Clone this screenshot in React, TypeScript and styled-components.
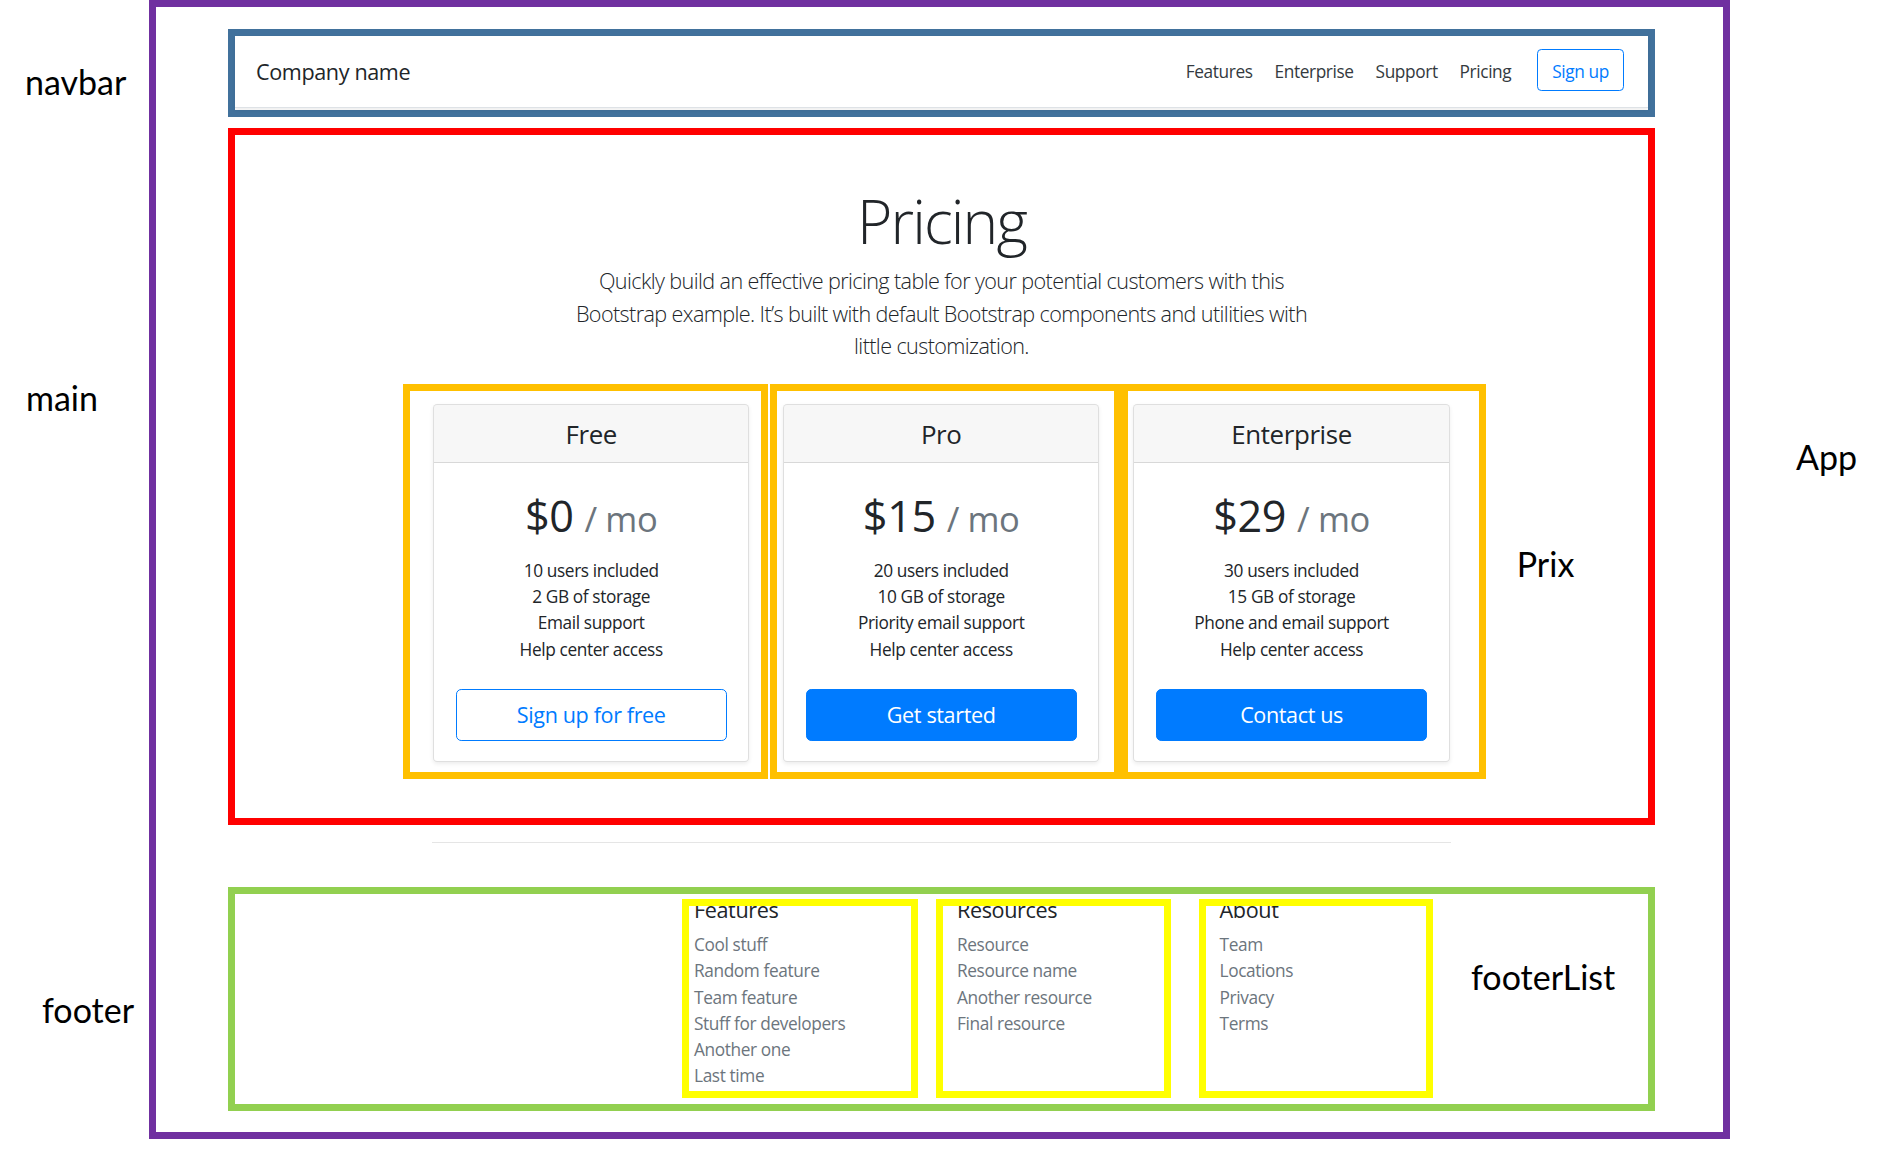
import React from "react";
import styled, { createGlobalStyle } from "styled-components";

const GlobalStyle = createGlobalStyle`
  html, body {
    margin: 0;
    padding: 0;
    background: #ffffff;
  }
  body {
    font-family: "Open Sans", "Noto Sans", sans-serif;
    letter-spacing: -0.024em;
    color: #212529;
  }
  *, *::before, *::after {
    box-sizing: border-box;
  }
`;

const Page = styled.div`
  display: grid;
  grid-template-columns: 149px 1581px 1fr;
  grid-template-rows: auto auto auto;
  align-content: start;
  width: 1880px;
  min-height: 1157px;
`;

const AppFrame = styled.div`
  grid-column: 2;
  grid-row: 1 / -1;
  border: 7px solid #7030a0;
`;

const Callout = styled.div<{ $top: number; $left: number }>`
  font-family: Lato, "Liberation Sans", sans-serif;
  font-size: 34px;
  line-height: 40px;
  letter-spacing: normal;
  color: #000000;
  white-space: nowrap;
  align-self: start;
  justify-self: start;
  margin-top: ${(p) => p.$top}px;
  margin-left: ${(p) => p.$left}px;
`;

const SideLabel = styled(Callout)<{ $row: number }>`
  grid-column: 1;
  grid-row: ${(p) => p.$row};
`;

const AppLabel = styled(Callout)`
  grid-column: 3;
  grid-row: 1 / -1;
`;

/* ---------- navbar ---------- */

const NavOutline = styled.div`
  grid-column: 2;
  grid-row: 1;
  align-self: start;
  margin: 29px 75px 0 79px;
  border: 7px solid #41719c;
`;

const Navbar = styled.header`
  display: flex;
  align-items: center;
  height: 72px;
  padding: 0 24px 3px 21px;
  margin-bottom: 2px;
  background: #ffffff;
  border-bottom: 1px solid #dee2e6;
  box-shadow: 0 2px 4px rgba(0, 0, 0, 0.075);
`;

const Brand = styled.h5`
  margin: 4px auto 0 0;
  font-size: 21.6px;
  font-weight: 400;
  line-height: 26px;
  color: #212529;
`;

const NavLinks = styled.nav`
  display: flex;
  gap: 4.7px;
  margin-right: 17.3px;
`;

const NavLink = styled.a`
  padding: 10.6px 8.64px 6.6px;
  font-size: 17.28px;
  line-height: 25.9px;
  color: #343a40;
  text-decoration: none;
`;

const OutlineButton = styled.a`
  display: inline-block;
  padding: 9px 14px 5px;
  font-size: 17.28px;
  line-height: 25.9px;
  color: #007bff;
  border: 1px solid #007bff;
  border-radius: 4.3px;
  text-decoration: none;
`;

/* ---------- main ---------- */

const MainOutline = styled.main`
  grid-column: 2;
  grid-row: 2;
  align-self: start;
  margin: 11px 75px 0 79px;
  border: 7px solid #ff0000;
  padding: 49.5px 0 39px;
`;

const Title = styled.h1`
  margin: 0 0 8.3px;
  font-size: 60.5px;
  font-weight: 300;
  line-height: 72.6px;
  letter-spacing: -0.031em;
  text-align: center;
  color: #212529;
`;

const Lead = styled.p`
  margin: 0;
  font-size: 21.6px;
  font-weight: 300;
  line-height: 32.2px;
  letter-spacing: -0.028em;
  text-align: center;
  color: #212529;
`;

const PrixRow = styled.div`
  display: flex;
  align-items: flex-start;
  margin-top: 22px;
  padding-left: 168px;
`;

const PrixOutline = styled.div<{ $ml: number; $pl: number; $pr: number }>`
  margin-left: ${(p) => p.$ml}px;
  padding: 13px ${(p) => p.$pr}px 10px ${(p) => p.$pl}px;
  border: 7px solid #ffc000;
`;

const Card = styled.div`
  width: 316.4px;
  display: flex;
  flex-direction: column;
  background: #ffffff;
  border: 1px solid rgba(0, 0, 0, 0.125);
  border-radius: 4.3px;
  box-shadow: 0 2px 4px rgba(0, 0, 0, 0.075);
  overflow: hidden;
`;

const CardHeader = styled.div`
  padding: 14px 21.6px 12px;
  background: rgba(0, 0, 0, 0.03);
  border-bottom: 1px solid rgba(0, 0, 0, 0.125);
  text-align: center;
`;

const PlanName = styled.h4`
  margin: 0;
  font-size: 25.9px;
  font-weight: 400;
  line-height: 31px;
  color: #212529;
`;

const CardBody = styled.div`
  padding: 21.6px 21.6px 19.8px;
  text-align: center;
`;

const Price = styled.h1`
  margin: 5.1px 0 0;
  font-size: 43.2px;
  font-weight: 400;
  line-height: 51.8px;
  color: #212529;
`;

const Per = styled.small`
  font-size: 80%;
  font-weight: 400;
  line-height: 1;
  color: #6c757d;
`;

const FeatureList = styled.ul`
  list-style: none;
  margin: 16.2px 0 26.3px;
  padding: 0;
`;

const Feature = styled.li`
  font-size: 17.28px;
  line-height: 26.3px;
  color: #212529;
`;

const PlanButton = styled.button<{ $solid?: boolean }>`
  display: block;
  width: 100%;
  height: 52px;
  padding: 0 17.28px;
  font-family: inherit;
  letter-spacing: inherit;
  font-size: 21.6px;
  line-height: 32.4px;
  border: 1px solid #007bff;
  border-radius: 5.2px;
  background: ${(p) => (p.$solid ? "#007bff" : "#ffffff")};
  color: ${(p) => (p.$solid ? "#ffffff" : "#007bff")};
  cursor: pointer;
`;

/* ---------- footer ---------- */

const FooterArea = styled.footer`
  grid-column: 2;
  grid-row: 3;
  align-self: start;
  margin: 17px 75px 28px 79px;
  display: flex;
  flex-direction: column;
`;

const Rule = styled.hr`
  margin: 0 0 0 204px;
  width: 1019px;
  height: 0;
  border: 0;
  border-top: 1px solid rgba(0, 0, 0, 0.1);
`;

const FooterOutline = styled.div`
  margin-top: 44px;
  height: 224px;
  display: flex;
  align-items: flex-start;
  padding: 5px 0 0 447px;
  border: 7px solid #92d050;
`;

const ListOutline = styled.div<{ $w: number; $ml: number; $pl: number }>`
  position: relative;
  width: ${(p) => p.$w}px;
  height: 199px;
  margin-left: ${(p) => p.$ml}px;
  padding-left: ${(p) => p.$pl}px;

  &::after {
    content: "";
    position: absolute;
    inset: 0;
    border: 7px solid #ffff00;
    pointer-events: none;
  }
`;

const ListHeading = styled.h5`
  margin: -2.4px 0 9.4px;
  font-size: 21.6px;
  font-weight: 400;
  line-height: 26px;
  color: #212529;
`;

const LinkList = styled.ul`
  list-style: none;
  margin: 0;
  padding: 0;
`;

const LinkItem = styled.li`
  font-size: 17.28px;
  line-height: 26.3px;
  color: #6c757d;
`;

const plans = [
  {
    name: "Free",
    price: "$0",
    features: ["10 users included", "2 GB of storage", "Email support", "Help center access"],
    cta: "Sign up for free",
    solid: false,
    box: { ml: 0, pl: 23, pr: 12 },
  },
  {
    name: "Pro",
    price: "$15",
    features: ["20 users included", "10 GB of storage", "Priority email support", "Help center access"],
    cta: "Get started",
    solid: true,
    box: { ml: 1.5, pl: 6.1, pr: 14.5 },
  },
  {
    name: "Enterprise",
    price: "$29",
    features: ["30 users included", "15 GB of storage", "Phone and email support", "Help center access"],
    cta: "Contact us",
    solid: true,
    box: { ml: 0.5, pl: 5, pr: 29 },
  },
];

const footerLists = [
  {
    title: "Features",
    items: ["Cool stuff", "Random feature", "Team feature", "Stuff for developers", "Another one", "Last time"],
    box: { w: 236, ml: 0, pl: 12 },
  },
  {
    title: "Resources",
    items: ["Resource", "Resource name", "Another resource", "Final resource"],
    box: { w: 235, ml: 18, pl: 21 },
  },
  {
    title: "About",
    items: ["Team", "Locations", "Privacy", "Terms"],
    box: { w: 234, ml: 28, pl: 20.6 },
  },
];

export default function App() {
  return (
    <>
      <GlobalStyle />
      <Page>
        <AppFrame />

        <SideLabel $row={1} $top={62} $left={25}>navbar</SideLabel>
        <SideLabel $row={2} $top={261} $left={26}>main</SideLabel>
        <SideLabel $row={3} $top={165} $left={42}>footer</SideLabel>
        <AppLabel $top={437} $left={66}>App</AppLabel>

        <NavOutline>
          <Navbar>
            <Brand>Company name</Brand>
            <NavLinks>
              <NavLink href="#">Features</NavLink>
              <NavLink href="#">Enterprise</NavLink>
              <NavLink href="#">Support</NavLink>
              <NavLink href="#">Pricing</NavLink>
            </NavLinks>
            <OutlineButton href="#">Sign up</OutlineButton>
          </Navbar>
        </NavOutline>

        <MainOutline>
          <Title>Pricing</Title>
          <Lead>
            Quickly build an effective pricing table for your potential customers with this
            <br />
            Bootstrap example. It’s built with default Bootstrap components and utilities with
            <br />
            little customization.
          </Lead>
          <PrixRow>
            {plans.map((plan) => (
              <PrixOutline key={plan.name} $ml={plan.box.ml} $pl={plan.box.pl} $pr={plan.box.pr}>
                <Card>
                  <CardHeader>
                    <PlanName>{plan.name}</PlanName>
                  </CardHeader>
                  <CardBody>
                    <Price>
                      {plan.price} <Per>/ mo</Per>
                    </Price>
                    <FeatureList>
                      {plan.features.map((f) => (
                        <Feature key={f}>{f}</Feature>
                      ))}
                    </FeatureList>
                    <PlanButton type="button" $solid={plan.solid}>
                      {plan.cta}
                    </PlanButton>
                  </CardBody>
                </Card>
              </PrixOutline>
            ))}
            <Callout $top={160} $left={31}>Prix</Callout>
          </PrixRow>
        </MainOutline>

        <FooterArea>
          <Rule />
          <FooterOutline>
            {footerLists.map((list) => (
              <ListOutline key={list.title} $w={list.box.w} $ml={list.box.ml} $pl={list.box.pl}>
                <ListHeading>{list.title}</ListHeading>
                <LinkList>
                  {list.items.map((item) => (
                    <LinkItem key={item}>{item}</LinkItem>
                  ))}
                </LinkList>
              </ListOutline>
            ))}
            <Callout $top={58} $left={38}>footerList</Callout>
          </FooterOutline>
        </FooterArea>
      </Page>
    </>
  );
}
